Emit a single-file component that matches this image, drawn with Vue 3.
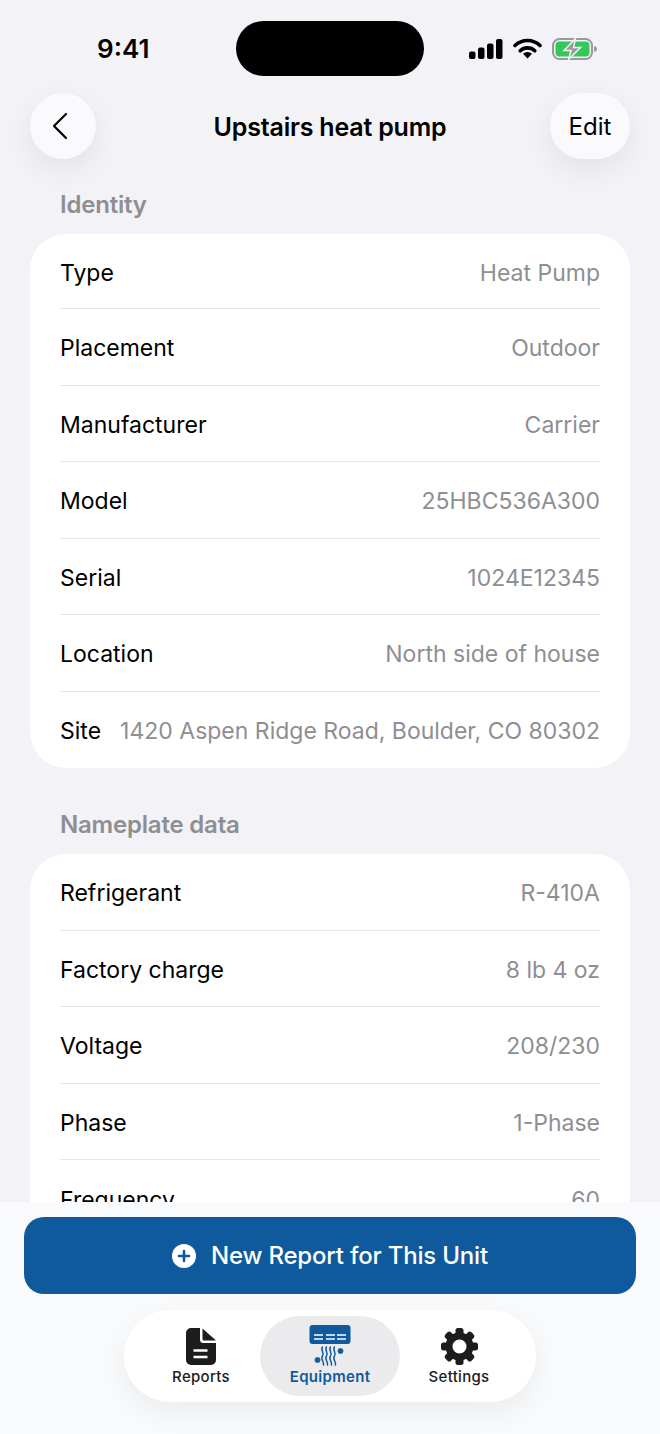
<script setup>
const identity = [
  ['Type', 'Heat Pump'],
  ['Placement', 'Outdoor'],
  ['Manufacturer', 'Carrier'],
  ['Model', '25HBC536A300'],
  ['Serial', '1024E12345'],
  ['Location', 'North side of house'],
  ['Site', '1420 Aspen Ridge Road, Boulder, CO 80302']
]

const nameplate = [
  ['Refrigerant', 'R-410A'],
  ['Factory charge', '8 lb 4 oz'],
  ['Voltage', '208/230'],
  ['Phase', '1-Phase'],
  ['Frequency', '60']
]

const gearTeeth = [0, 45, 90, 135, 180, 225, 270, 315]
</script>

<template>
  <div class="page">
    <header class="status">
      <span class="time">9:41</span>
      <div class="island"></div>
      <div class="status-icons">
        <svg width="34" height="20" viewBox="0 0 34 20">
          <rect x="0" y="12.500" width="6.500" height="7.500" rx="2" fill="#000" />
          <rect x="9" y="8.500" width="6.500" height="11.500" rx="2" fill="#000" />
          <rect x="18" y="4.500" width="6.500" height="15.500" rx="2" fill="#000" />
          <rect x="27" y="0" width="6.500" height="20" rx="2" fill="#000" />
        </svg>
        <svg width="29" height="21" viewBox="0 0 29 21">
          <path d="M2 7.500a18 18 0 0 1 25 0" fill="none" stroke="#000" stroke-width="3.600" stroke-linecap="round" />
          <path d="M7.200 12.800a10.500 10.500 0 0 1 14.600 0" fill="none" stroke="#000" stroke-width="3.600" stroke-linecap="round" />
          <path d="M10 15.800a6.500 6.500 0 0 1 9 0L14.500 20.500z" fill="#000" />
        </svg>
        <svg width="46" height="22" viewBox="0 0 46 22">
          <rect x="1" y="1" width="39" height="20" rx="6.500" fill="none" stroke="#9a9a9c" stroke-width="2" />
          <path d="M42 8c2 .4 3 1.500 3 3s-1 2.600-3 3z" fill="#9a9a9c" />
          <rect x="3.500" y="3.500" width="34" height="15" rx="4" fill="#34c759" />
          <path d="M23.500 0.500 12 12.500h7L16.500 21.500 28.500 9.500h-7z" fill="#9a9a9c" stroke="#f2f2f7" stroke-width="1.500" />
        </svg>
      </div>
    </header>

    <nav class="nav">
      <button class="nav-btn back" aria-label="Back">
        <svg width="18" height="28" viewBox="0 0 18 28">
          <path d="M15 2 3 14l12 12" fill="none" stroke="#000" stroke-width="2.200" stroke-linecap="round" stroke-linejoin="round" />
        </svg>
      </button>
      <h1>Upstairs heat pump</h1>
      <button class="nav-btn edit">Edit</button>
    </nav>

    <main class="content">
      <section class="section">
        <h2>Identity</h2>
        <div class="card card-identity">
          <div v-for="row in identity" :key="row[0]" class="row">
            <span class="label">{{ row[0] }}</span>
            <span class="value">{{ row[1] }}</span>
          </div>
        </div>
      </section>

      <section class="section">
        <h2>Nameplate data</h2>
        <div class="card">
          <div v-for="row in nameplate" :key="row[0]" class="row">
            <span class="label">{{ row[0] }}</span>
            <span class="value">{{ row[1] }}</span>
          </div>
        </div>
      </section>
    </main>

    <footer class="bottom">
      <button class="cta">
        <svg width="24" height="24" viewBox="0 0 24 24">
          <circle cx="12" cy="12" r="12" fill="#fff" />
          <path d="M12 7v10M7 12h10" stroke="#0f5a9c" stroke-width="2.600" stroke-linecap="round" />
        </svg>
        New Report for This Unit
      </button>

      <div class="tabs">
        <div class="tab">
          <div class="tab-icon">
            <svg width="30" height="37" viewBox="0 0 30 37">
              <path d="M5 0h9v11.500a3.500 3.500 0 0 0 3.500 3.500H30v17a5 5 0 0 1-5 5H5a5 5 0 0 1-5-5V5a5 5 0 0 1 5-5z" fill="#1c1c1e" />
              <path d="M16.500.5 30 12.500H18a1.500 1.500 0 0 1-1.500-1.500z" fill="#1c1c1e" />
              <path d="M7.500 22.500h14M7.500 29h14" stroke="#fff" stroke-width="2.400" />
            </svg>
          </div>
          <span>Reports</span>
        </div>
        <div class="tab active">
          <div class="tab-icon">
            <svg width="42" height="42" viewBox="0 0 42 42">
              <rect x="0.500" y="0" width="41" height="19" rx="3" fill="#0f5a9c" />
              <path d="M5 10h9M17 10h9M28 10h9M5 14h9M17 14h9M28 14h9" stroke="#fff" stroke-width="1.500" />
              <path d="M13.500 22c-2.500 3 2.500 6 0 9s2 6 1 9M17.500 22c-2.500 3 2.500 6 0 9s2 6 1 9M21.500 22c-2.500 3 2.500 6 0 9s2 6 1 9M25.500 22c-2.500 3 2.500 6 0 9s2 6 1 9" fill="none" stroke="#0f5a9c" stroke-width="1.500" stroke-linecap="round" />
              <path d="M28.500 26h6M31.500 23v6M29.400 23.900l4.200 4.200M33.600 23.900l-4.200 4.200" stroke="#0f5a9c" stroke-width="1.500" />
              <path d="M5.500 35h6M8.500 32v6M6.400 32.900l4.200 4.200M10.600 32.900l-4.200 4.200" stroke="#0f5a9c" stroke-width="1.500" />
            </svg>
          </div>
          <span>Equipment</span>
        </div>
        <div class="tab">
          <div class="tab-icon">
            <svg width="37" height="37" viewBox="0 0 37 37">
              <rect
                v-for="angle in gearTeeth"
                :key="angle"
                x="14.500"
                y="0"
                width="8"
                height="10"
                rx="2.500"
                fill="#1c1c1e"
                :transform="`rotate(${angle} 18.500 18.500)`"
              />
              <circle cx="18.500" cy="18.500" r="10.500" fill="none" stroke="#1c1c1e" stroke-width="7" />
            </svg>
          </div>
          <span>Settings</span>
        </div>
      </div>
    </footer>
  </div>
</template>

<style>
body {
  margin: 0;
  background: #f2f2f7;
}
</style>

<style scoped>
.page {
  width: 660px;
  height: 1434px;
  display: flex;
  flex-direction: column;
  overflow: hidden;
  background: #f2f2f7;
  color: #000;
  font-family: Inter, "Liberation Sans", sans-serif;
}

.status {
  height: 93px;
  flex: none;
  display: grid;
  grid-template-columns: 1fr 188px 1fr;
  align-items: start;
  padding-top: 21px;
  box-sizing: border-box;
}

.time {
  font-size: 26px;
  font-weight: 600;
  line-height: 55px;
  padding-left: 97px;
}

.island {
  height: 55px;
  border-radius: 28px;
  background: #000;
}

.status-icons {
  display: flex;
  align-items: center;
  justify-content: flex-end;
  gap: 10px;
  height: 55px;
  padding-right: 62px;
}

.nav {
  height: 66px;
  flex: none;
  display: grid;
  grid-template-columns: 1fr auto 1fr;
  align-items: center;
  padding: 0 30px;
}

.nav h1 {
  margin: 2px 0 0;
  font-size: 25px;
  font-weight: 600;
  letter-spacing: -0.2px;
}

.nav-btn {
  height: 66px;
  border: none;
  border-radius: 33px;
  background: #fafafd;
  box-shadow: 0 10px 30px rgba(0, 0, 0, 0.07);
  display: flex;
  align-items: center;
  justify-content: center;
  font-family: inherit;
  color: #000;
  padding: 0;
}

.back {
  width: 66px;
  justify-self: start;
}

.back svg {
  margin-right: 6px;
}

.edit {
  width: 80px;
  font-size: 24px;
  justify-self: end;
}

.content {
  flex: 1;
  min-height: 0;
  overflow: hidden;
  padding: 30.500px 30px 0;
}

.section {
  margin-bottom: 41.500px;
}

.section h2 {
  margin: 0 0 14.500px 30px;
  font-size: 24px;
  line-height: 30px;
  font-weight: 600;
  letter-spacing: -0.2px;
  color: #8e8e93;
}

.card {
  background: #fff;
  border-radius: 36px;
  padding: 0 30px;
}

.row {
  height: 76.500px;
  box-sizing: border-box;
  padding-top: 3px;
  display: flex;
  align-items: center;
  justify-content: space-between;
  gap: 16px;
  font-size: 23px;
  border-bottom: 1.500px solid #e6e6e9;
}

.card-identity .row:first-child {
  height: 75px;
}

.row:last-child {
  border-bottom: none;
}

.label {
  white-space: nowrap;
}

.value {
  color: #8e8e93;
  white-space: nowrap;
}

.bottom {
  height: 232px;
  flex: none;
  box-sizing: border-box;
  background: #f9fafb;
  padding: 15px 24px 0;
  display: flex;
  flex-direction: column;
  align-items: center;
}

.cta {
  width: 100%;
  height: 77px;
  flex: none;
  border: none;
  border-radius: 20px;
  background: #0f5a9c;
  color: #fff;
  font-family: inherit;
  font-size: 24px;
  font-weight: 500;
  letter-spacing: -0.2px;
  display: flex;
  align-items: center;
  justify-content: center;
  gap: 15px;
}

.tabs {
  margin-top: 16px;
  width: 412px;
  height: 92px;
  box-sizing: border-box;
  padding: 6px;
  border-radius: 46px;
  background: #fff;
  box-shadow: 0 10px 30px rgba(0, 0, 0, 0.06);
  display: flex;
  align-items: stretch;
  justify-content: center;
}

.tab {
  width: 118px;
  box-sizing: border-box;
  padding-top: 9px;
  display: flex;
  flex-direction: column;
  align-items: center;
  gap: 1px;
  font-size: 15px;
  line-height: 18px;
  font-weight: 500;
  color: #1c1c1e;
  letter-spacing: 0.3px;
}

.tab-icon {
  height: 42px;
  display: flex;
  align-items: center;
  justify-content: center;
}

.tab.active {
  width: 140px;
  border-radius: 40px;
  background: #ebebee;
  color: #0f5a9c;
  font-weight: 600;
}
</style>
